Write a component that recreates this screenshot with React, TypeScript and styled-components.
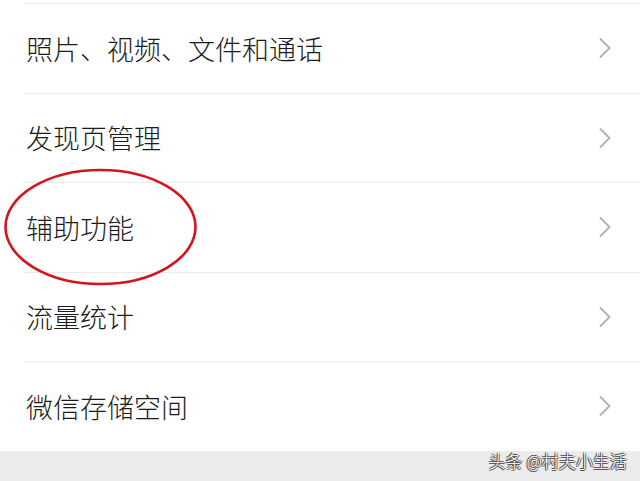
import React from 'react'
import styled, { createGlobalStyle } from 'styled-components'

const GlobalStyle = createGlobalStyle`
  html, body {
    margin: 0;
    padding: 0;
    background: #ffffff;
  }
  body {
    font-family: "Noto Sans CJK SC", "Noto Sans", sans-serif;
  }
`

const Page = styled.div`
  width: 640px;
  height: 481px;
  display: flex;
  flex-direction: column;
  background: #ffffff;
  overflow: hidden;
  position: relative;
`

const List = styled.div`
  display: flex;
  flex-direction: column;
  padding-top: 3px;
  flex: 1;
`

const Row = styled.div`
  position: relative;
  display: flex;
  align-items: center;
  justify-content: space-between;
  height: 88.5px;
  margin-left: 24px;
  padding-right: 28px;
  border-top: 1px solid #ebebeb;
`

const Label = styled.span`
  font-size: 27px;
  font-weight: 300;
  color: #1b1b1b;
  margin-left: 2px;
  line-height: 1;
`

const Chevron = styled.svg`
  width: 14px;
  height: 22px;
  display: block;
`

const Footer = styled.div`
  height: 31px;
  background: #ebebeb;
  display: flex;
  justify-content: flex-end;
  align-items: flex-start;
  padding-right: 13px;
`

const Watermark = styled.span`
  font-size: 17px;
  font-weight: 300;
  color: #ffffff;
  line-height: 1;
  margin-top: 1px;
  text-shadow: -1px -1px 0 #444, 1px 0 0 #555, 0 1px 0 #555, -1px 1px 0 #666;
`

const Circle = styled.svg`
  position: absolute;
  left: 0;
  top: 165px;
  width: 204px;
  height: 124px;
  pointer-events: none;
`

const items = ['照片、视频、文件和通话', '发现页管理', '辅助功能', '流量统计', '微信存储空间']

const Arrow = () => (
  <Chevron viewBox="0 0 14 22">
    <path d="M2 1.5 L11.5 11 L2 20.5" fill="none" stroke="#b3b3b3" strokeWidth="2" />
  </Chevron>
)

const App: React.FC = () => (
  <Page>
    <GlobalStyle />
    <List>
      {items.map((label) => (
        <Row key={label}>
          <Label>{label}</Label>
          <Arrow />
        </Row>
      ))}
    </List>
    <Footer>
      <Watermark>头条 @村夫小生活</Watermark>
    </Footer>
    <Circle viewBox="0 0 204 124">
      <ellipse cx="100.5" cy="62" rx="95" ry="57" fill="none" stroke="#d0171d" strokeWidth="2.6" />
    </Circle>
  </Page>
)

export default App
